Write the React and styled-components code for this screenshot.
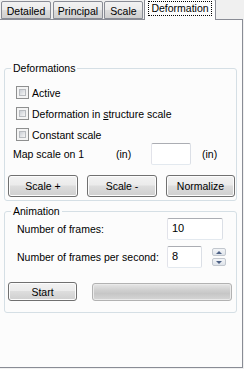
import React from 'react';
import styled, { createGlobalStyle } from 'styled-components';

const GlobalStyle = createGlobalStyle`
    body {
        margin: 0;
        background: #f0f0f0;
        font-family: "Liberation Sans", Arial, sans-serif;
        font-size: 10.5px;
        color: #000;
    }
`;

const Window = styled.div`
    width: 244px;
    height: 369px;
    overflow: hidden;
    background: #f0f0f0;
`;

const TabStrip = styled.div`
    display: flex;
    align-items: flex-end;
    height: 19px;
    padding-left: 1px;
    position: relative;
    z-index: 1;
`;

const Tab = styled.div`
    box-sizing: border-box;
    width: ${props => props.w}px;
    margin-left: ${props => props.gap || 0}px;
    height: ${props => (props.active ? 21 : 18)}px;
    margin-bottom: ${props => (props.active ? -1 : 0)}px;
    border: 1px solid #898c95;
    border-bottom: ${props => (props.active ? 'none' : '1px solid #898c95')};
    border-radius: 2px 2px 0 0;
    background: ${props => (props.active
        ? '#fcfcfc'
        : 'linear-gradient(#f2f2f2, #ebebeb 50%, #dddddd 51%, #cfcfcf)')};
    display: flex;
    align-items: ${props => (props.active ? 'flex-start' : 'center')};
    justify-content: center;
    padding-top: ${props => (props.active ? 2 : 1)}px;
    white-space: nowrap;
`;

const FocusText = styled.span`
    outline: 1px dotted #000;
    padding: 0 2px;
    line-height: 13px;
`;

const Panel = styled.div`
    box-sizing: border-box;
    width: 243px;
    height: 349px;
    background: #fcfcfc;
    border: 1px solid #898c95;
    border-left: none;
    padding: 42px 0 0 4px;
`;

const Group = styled.fieldset`
    box-sizing: border-box;
    width: 233px;
    margin: ${props => props.top || 0}px 0 0 0;
    padding: 0 0 ${props => props.bottom || 0}px 0;
    border: 1px solid #d5dfe5;
    border-radius: 3px;
    min-width: 0;
`;

const Legend = styled.legend`
    margin-left: 6px;
    padding: 0 2px;
    line-height: 13px;
`;

const CheckRow = styled.label`
    display: flex;
    align-items: center;
    gap: 3px;
    height: 13px;
    margin: ${props => props.top}px 0 0 11px;
    white-space: nowrap;
`;

const Box = styled.span`
    box-sizing: border-box;
    width: 13px;
    height: 13px;
    flex: none;
    border: 1px solid #8e8f8f;
    background: #f4f4f4;
    position: relative;
    &::after {
        content: '';
        position: absolute;
        inset: 2px;
        background: linear-gradient(135deg, #cbcfd5, #f6f6f6);
        border: 1px solid #b8bbbf;
        box-sizing: border-box;
    }
`;

const Underline = styled.span`
    text-decoration: underline;
`;

const MapRow = styled.div`
    display: flex;
    align-items: center;
    margin: 2px 0 0 8px;
    height: 22px;
`;

const Cell = styled.span`
    width: ${props => props.w}px;
    flex: none;
    white-space: nowrap;
`;

const TextBox = styled.div`
    box-sizing: border-box;
    width: ${props => props.w}px;
    height: 22px;
    flex: none;
    border: 1px solid #abadb3;
    border-color: #abadb3 #dbdfe6 #e3e9ef #e2e3ea;
    border-radius: 2px;
    background: #fff;
    padding: 3px 0 0 4px;
    line-height: 13px;
    font-size: 11px;
`;

const ButtonRow = styled.div`
    display: flex;
    align-items: center;
    gap: ${props => props.gap ?? 9}px;
    margin: ${props => props.top}px 0 0 3px;
`;

const Button = styled.button`
    box-sizing: border-box;
    width: ${props => props.w}px;
    height: ${props => props.h || 22}px;
    flex: none;
    border: 1px solid #707070;
    border-radius: 3px;
    background: linear-gradient(#f2f2f2, #ebebeb 45%, #dddddd 50%, #cfcfcf);
    box-shadow: inset 0 0 0 1px #fcfcfc;
    font-family: inherit;
    font-size: 10.5px;
    color: #000;
    padding: 0;
`;

const Progress = styled.div`
    box-sizing: border-box;
    width: 140px;
    height: 18px;
    flex: none;
    margin-left: ${props => props.left}px;
    border: 1px solid #b2b2b2;
    border-radius: 3px;
    background: linear-gradient(#e6e6e6, #cfcfcf 40%, #c6c6c6 60%, #d6d6d6);
    box-shadow: inset 0 0 0 1px #eaeaea;
`;

const FieldRow = styled.div`
    display: flex;
    align-items: center;
    margin: ${props => props.top}px 0 0 12px;
    height: 22px;
`;

const Spinner = styled.div`
    display: flex;
    flex-direction: column;
    gap: 2px;
    margin-left: 10px;
`;

const SpinButton = styled.div`
    box-sizing: border-box;
    width: 14px;
    height: 8px;
    border: 1px solid #c2c7ce;
    border-radius: 2px;
    background: linear-gradient(#f3f5f8, #dfe4ea);
    display: flex;
    align-items: center;
    justify-content: center;
    &::after {
        content: '';
        border-left: 3px solid transparent;
        border-right: 3px solid transparent;
        ${props => (props.up
        ? 'border-bottom: 3px solid #4d6185;'
        : 'border-top: 3px solid #4d6185;')}
    }
`;

const App = () => (
    <Window>
        <GlobalStyle />
        <TabStrip>
            <Tab w={50}>Detailed</Tab>
            <Tab w={50} gap={2}>Principal</Tab>
            <Tab w={39} gap={1}>Scale</Tab>
            <Tab w={72} gap={1} active><FocusText>Deformation</FocusText></Tab>
        </TabStrip>
        <Panel>
            <Group bottom={3}>
                <Legend>Deformations</Legend>
                <CheckRow top={11}><Box /><span>Active</span></CheckRow>
                <CheckRow top={8}><Box /><span>Deformation in <Underline>s</Underline>tructure scale</span></CheckRow>
                <CheckRow top={8}><Box /><span>Constant scale</span></CheckRow>
                <MapRow>
                    <Cell w={103}>Map scale on 1</Cell>
                    <Cell w={35}>(in)</Cell>
                    <TextBox w={40} />
                    <Cell w={11} />
                    <Cell w={20}>(in)</Cell>
                </MapRow>
                <ButtonRow top={10}>
                    <Button w={70}>Scale +</Button>
                    <Button w={70}>Scale -</Button>
                    <Button w={69}>Normalize</Button>
                </ButtonRow>
            </Group>
            <Group top={4} bottom={11}>
                <Legend>Animation</Legend>
                <FieldRow top={0}>
                    <Cell w={150}>Number of frames:</Cell>
                    <TextBox w={56}>10</TextBox>
                </FieldRow>
                <FieldRow top={6}>
                    <Cell w={150}>Number of frames per second:</Cell>
                    <TextBox w={35}>8</TextBox>
                    <Spinner>
                        <SpinButton up />
                        <SpinButton />
                    </Spinner>
                </FieldRow>
                <ButtonRow top={14} gap={0}>
                    <Button w={69} h={19}>Start</Button>
                    <Progress left={15} />
                </ButtonRow>
            </Group>
        </Panel>
    </Window>
);

export default App;
